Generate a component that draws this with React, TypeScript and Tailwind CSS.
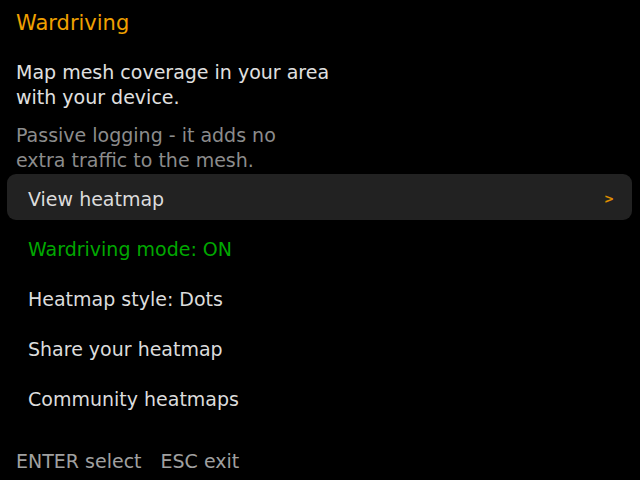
export default function App() {
  const items = [
    { label: "View heatmap", active: true },
    { label: "Wardriving mode: ON", green: true },
    { label: "Heatmap style: Dots" },
    { label: "Share your heatmap" },
    { label: "Community heatmaps" },
  ];

  return (
    <div className="w-[640px] h-[480px] bg-black flex flex-col font-['DejaVu_Sans',sans-serif] text-[19px] leading-[25px] overflow-hidden">
      <h1 className="text-[#f0a000] text-[21px] px-4 pt-[10px] leading-[26px]">Wardriving</h1>

      <p className="text-[#e0e0e0] px-4 mt-[24px] w-[350px]">
        Map mesh coverage in your area with your device.
      </p>

      <p className="text-[#8c8c8c] px-4 mt-[13px] w-[310px]">
        Passive logging - it adds no extra traffic to the mesh.
      </p>

      <ul className="flex flex-col mt-[1px] ml-[7px] mr-[8px]">
        {items.map((it) => (
          <li
            key={it.label}
            className={
              "h-[46px] mb-[4px] pl-[21px] pr-[18px] pt-[4px] flex items-center justify-between rounded-[9px] " +
              (it.active ? "bg-[#222222]" : "")
            }
          >
            <span className={it.green ? "text-[#00a800]" : "text-[#dcdcdc]"}>{it.label}</span>
            {it.active && <span className="text-[#e09000] text-[12px] font-bold">&gt;</span>}
          </li>
        ))}
      </ul>

      <div className="px-4 mt-auto mb-[6px] text-[#a0a0a0] flex gap-[19px]">
        <span>ENTER select</span>
        <span>ESC exit</span>
      </div>
    </div>
  );
}
